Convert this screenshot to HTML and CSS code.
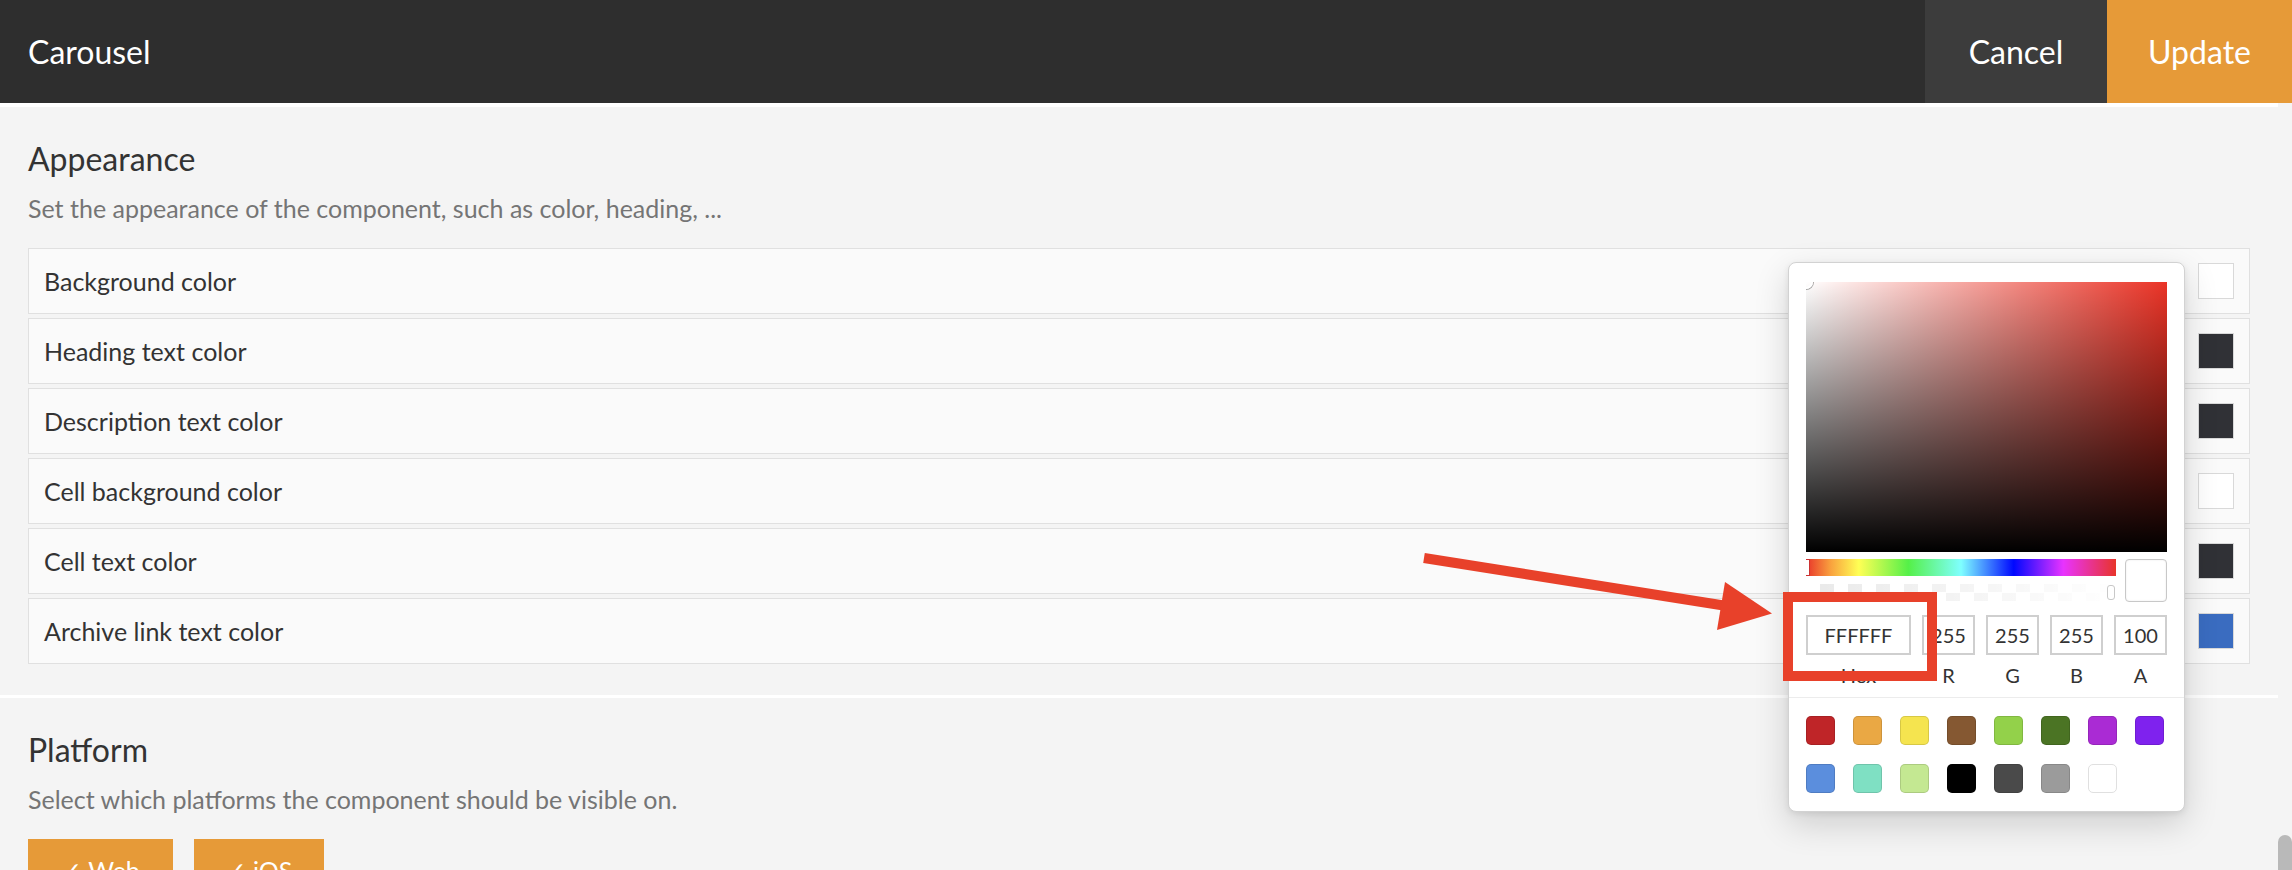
FILE: index.html
```html
<!DOCTYPE html>
<html>
<head>
<meta charset="utf-8">
<link rel="stylesheet" href="styles.css">
</head>
<body>
<div class="app">
  <header class="topbar">
    <div class="title">Carousel</div>
    <div class="actions">
      <button class="btn cancel">Cancel</button>
      <button class="btn update">Update</button>
    </div>
  </header>
  <div class="body">
    <main class="content">
      <section class="section appearance">
        <h2 class="heading">Appearance</h2>
        <p class="desc">Set the appearance of the component, such as color, heading, ...</p>
        <div class="rows">
          <div class="row"><span class="label">Background color</span><span class="swatch sw-white"></span></div>
          <div class="row"><span class="label">Heading text color</span><span class="swatch sw-dark"></span></div>
          <div class="row"><span class="label">Description text color</span><span class="swatch sw-dark"></span></div>
          <div class="row"><span class="label">Cell background color</span><span class="swatch sw-white"></span></div>
          <div class="row"><span class="label">Cell text color</span><span class="swatch sw-dark"></span></div>
          <div class="row"><span class="label">Archive link text color</span><span class="swatch sw-blue"></span></div>
        </div>
      </section>
      <section class="section platform">
        <h2 class="heading">Platform</h2>
        <p class="desc">Select which platforms the component should be visible on.</p>
        <div class="platforms">
          <button class="pbtn web">✓ Web</button>
          <button class="pbtn ios">✓ iOS</button>
        </div>
      </section>
    </main>
    <div class="scrollbar"><div class="thumb"></div></div>
  </div>

  <div class="picker">
    <div class="picker-top">
      <div class="sat"><div class="sat-white"></div><div class="sat-black"></div><div class="sat-handle"></div></div>
      <div class="sliders">
        <div class="bars">
          <div class="hue"><div class="hue-handle"></div></div>
          <div class="alpha"><div class="alpha-handle"></div></div>
        </div>
        <div class="preview"></div>
      </div>
      <div class="fields">
        <div class="field"><div class="input">FFFFFF</div><div class="flabel">Hex</div></div>
        <div class="field"><div class="input">255</div><div class="flabel">R</div></div>
        <div class="field"><div class="input">255</div><div class="flabel">G</div></div>
        <div class="field"><div class="input">255</div><div class="flabel">B</div></div>
        <div class="field"><div class="input">100</div><div class="flabel">A</div></div>
      </div>
    </div>
    <div class="presets">
      <span class="preset p-red"></span>
      <span class="preset p-orange"></span>
      <span class="preset p-yellow"></span>
      <span class="preset p-brown"></span>
      <span class="preset p-lime"></span>
      <span class="preset p-green"></span>
      <span class="preset p-magenta"></span>
      <span class="preset p-violet"></span>
      <span class="preset p-blue"></span>
      <span class="preset p-teal"></span>
      <span class="preset p-pale"></span>
      <span class="preset p-black"></span>
      <span class="preset p-dgrey"></span>
      <span class="preset p-grey"></span>
      <span class="preset p-white"></span>
    </div>
  </div>

  <div class="highlight"></div>
  <svg class="arrow" width="2292" height="870" viewBox="0 0 2292 870">
    <line x1="1424" y1="558" x2="1730" y2="606.5" stroke="#e8412a" stroke-width="10"/>
    <polygon points="1725,582 1717,630 1772,613.5" fill="#e8412a"/>
  </svg>
</div>
</body>
</html>
```

FILE: styles.css
```css
* { box-sizing: border-box; }
html, body { margin: 0; padding: 0; }
body {
  background: #f4f4f4;
  font-family: Lato, "Open Sans", "Liberation Sans", sans-serif;
  color: #333;
}
.app {
  position: relative;
  width: 2292px;
  height: 870px;
  overflow: hidden;
  display: flex;
  flex-direction: column;
}

/* top bar */
.topbar {
  height: 103px;
  flex: 0 0 103px;
  background: #2e2e2e;
  display: flex;
  align-items: stretch;
  justify-content: space-between;
}
.title {
  display: flex;
  align-items: center;
  padding-left: 28px;
  color: #fff;
  font-size: 32px;
}
.actions { display: flex; }
.btn {
  border: 0;
  margin: 0;
  font-family: inherit;
  font-size: 32px;
  color: #fff;
  padding: 0;
  text-align: center;
}
.cancel { width: 182px; background: #3c3c3c; }
.update { width: 185px; background: #e69a38; }

/* body */
.body {
  flex: 1;
  display: flex;
  overflow: hidden;
}
.content { flex: 1; }
.scrollbar { width: 14px; flex: 0 0 14px; }
.thumb {
  margin-top: 732px;
  height: 160px;
  border-radius: 7px;
  background: #b9b9b9;
}

.section { padding: 33px 28px 0; }
.appearance {
  border-top: 4px solid #fff;
  border-bottom: 3px solid #fff;
  padding-bottom: 31px;
}
.heading {
  margin: 0;
  font-weight: 400;
  font-size: 32px;
  line-height: 38px;
  color: #333;
}
.desc {
  margin: 16px 0 0;
  font-size: 25px;
  line-height: 29px;
  color: #757575;
}
.rows {
  margin-top: 25px;
  display: flex;
  flex-direction: column;
  gap: 4px;
}
.row {
  height: 66px;
  background: #fafafa;
  border: 1px solid #e0e0e0;
  display: flex;
  align-items: center;
  justify-content: space-between;
  padding: 0 15px;
}
.label { font-size: 25px; color: #333; }
.swatch {
  width: 36px;
  height: 36px;
  border: 1px solid #d9d9d9;
}
.sw-white { background: #fff; }
.sw-dark { background: #303136; }
.sw-blue { background: #3a6cc0; }

.platforms {
  margin-top: 25px;
  display: flex;
  gap: 21px;
}
.pbtn {
  border: 0;
  margin: 0;
  background: #e69a38;
  color: #fff;
  font-family: Lato, "DejaVu Sans", sans-serif;
  font-size: 25px;
  line-height: 29px;
  padding: 17px 0 20px;
  text-align: center;
}
.web { width: 145px; }
.ios { width: 130px; }

/* colour picker popover */
.picker {
  position: absolute;
  left: 1788px;
  top: 262px;
  width: 397px;
  background: #fff;
  border: 1px solid #d2d2d2;
  border-radius: 8px;
  box-shadow: 0 12px 34px rgba(0,0,0,0.16), 0 2px 6px rgba(0,0,0,0.08);
}
.picker-top {
  padding: 19px 17px 10px;
}
.sat {
  position: relative;
  height: 270px;
  background: #ea3326;
  overflow: hidden;
}
.sat-white {
  position: absolute; left: 0; top: 0; right: 0; bottom: 0;
  background: linear-gradient(to right, #fff, rgba(255,255,255,0));
}
.sat-black {
  position: absolute; left: 0; top: 0; right: 0; bottom: 0;
  background: linear-gradient(to bottom, rgba(0,0,0,0), #000);
}
.sat-handle {
  position: absolute;
  left: -7px; top: -7px;
  width: 14px; height: 14px;
  border-radius: 50%;
  border: 2px solid #fff;
  box-shadow: 0 0 0 1px rgba(0,0,0,0.35);
}
.sliders {
  margin-top: 7px;
  display: flex;
  gap: 9px;
}
.bars { flex: 1; display: flex; flex-direction: column; gap: 8px; }
.hue {
  position: relative;
  height: 17px;
  background: linear-gradient(to right, #e8342a 0%, #f9a23e 8%, #ffff55 17%, #55f048 33%, #7fffff 50%, #0008ff 67%, #e833ff 83%, #e8342a 100%);
}
.hue-handle {
  position: absolute; left: 0; top: 0;
  width: 4px; height: 17px;
  background: #fff;
  border: 1px solid #c33;
  border-left: 0;
}
.alpha {
  position: relative;
  height: 17px;
  background:
    linear-gradient(to right, rgba(255,255,255,0), #fff),
    repeating-conic-gradient(#e9e9e9 0 25%, #fff 0 50%) 0 0 / 28px 17px;
}
.alpha-handle {
  position: absolute;
  right: 1px; top: 1px;
  width: 8px; height: 15px;
  border-radius: 3px;
  background: #fff;
  border: 1px solid #c8c8c8;
}
.preview {
  width: 42px;
  height: 43px;
  border: 1px solid #c8c8c8;
  border-radius: 4px;
  background: #fff;
  box-shadow: inset 0 0 2px rgba(0,0,0,0.1);
}
.fields {
  margin-top: 13px;
  display: grid;
  grid-template-columns: 105px 53px 53px 53px 53px;
  column-gap: 11px;
}
.field { display: flex; flex-direction: column; align-items: center; }
.input {
  width: 100%;
  height: 40px;
  border: 2px solid #cfcfcf;
  font-size: 20px;
  line-height: 36px;
  text-align: center;
  color: #333;
}
.flabel {
  margin-top: 8px;
  font-size: 20px;
  line-height: 24px;
  color: #333;
}
.presets {
  border-top: 1px solid #ececec;
  padding: 18px 17px 18px;
  display: grid;
  grid-template-columns: repeat(8, 29px);
  column-gap: 18px;
  row-gap: 19px;
}
.preset {
  width: 29px;
  height: 29px;
  border-radius: 5px;
  border: 1px solid rgba(0,0,0,0.12);
}
.p-red { background: #bf2528; }
.p-orange { background: #eaa844; }
.p-yellow { background: #f5e44f; }
.p-brown { background: #855832; }
.p-lime { background: #93d14a; }
.p-green { background: #4b7424; }
.p-magenta { background: #aa2bd4; }
.p-violet { background: #7f22ee; }
.p-blue { background: #5b8edd; }
.p-teal { background: #7fe0c3; }
.p-pale { background: #c4e892; }
.p-black { background: #000; }
.p-dgrey { background: #4a4a4a; }
.p-grey { background: #9b9b9b; }
.p-white { background: #fff; border-color: #e0e0e0; }

/* annotations */
.highlight {
  position: absolute;
  left: 1783px;
  top: 592px;
  width: 154px;
  height: 89px;
  border: 10px solid #e8412a;
}
.arrow {
  position: absolute;
  left: 0;
  top: 0;
  pointer-events: none;
}
```
